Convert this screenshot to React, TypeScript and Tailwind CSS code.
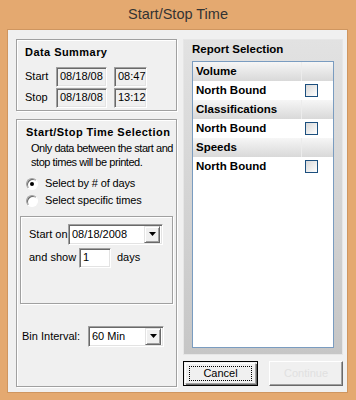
import React from "react";

const FONT = { fontFamily: '"Liberation Sans", Arial, sans-serif' };

// etched group box border (gray line + white highlight)
const etched =
  "border border-[#a0a0a0] shadow-[inset_1px_1px_0_#ffffff,1px_1px_0_#ffffff]";

// classic 3D sunken field
const sunken =
  "border border-t-[#a0a0a0] border-l-[#a0a0a0] border-b-white border-r-white shadow-[inset_1px_1px_0_#696969,inset_-1px_-1px_0_#e3e3e3]";

function Field({ value, className }: { value: string; className: string }) {
  return (
    <div className={`${sunken} flex h-[20px] items-center bg-[#f0f0f0] pl-[3px] text-[11px] text-black ${className}`}>
      {value}
    </div>
  );
}

function Combo({ value, className }: { value: string; className: string }) {
  return (
    <div className={`${sunken} flex h-[21px] items-center bg-white pl-[3px] pr-[2px] text-[11px] ${className}`}>
      <span className="flex-1">{value}</span>
      <div className="flex h-[17px] w-[16px] items-center justify-center border border-t-[#e3e3e3] border-l-[#e3e3e3] border-b-[#696969] border-r-[#696969] bg-[#f0f0f0] shadow-[inset_1px_1px_0_#ffffff,inset_-1px_-1px_0_#a0a0a0]">
        <svg width="7" height="4" viewBox="0 0 7 4">
          <path d="M0 0h7L3.5 4z" fill="#000" />
        </svg>
      </div>
    </div>
  );
}

function Radio({ checked, label }: { checked?: boolean; label: string }) {
  return (
    <div className="flex h-[16px] items-center gap-[7px]">
      <div className="flex h-[12px] w-[12px] items-center justify-center rounded-full border border-t-[#a0a0a0] border-l-[#a0a0a0] border-b-white border-r-white bg-white shadow-[inset_1px_1px_0_#696969]">
        {checked && <div className="h-[4px] w-[4px] rounded-full bg-black" />}
      </div>
      <span className="tracking-[-0.15px]">{label}</span>
    </div>
  );
}

function HeaderRow({ label }: { label: string }) {
  return (
    <div className="flex h-[19px] bg-gradient-to-b from-[#f6f6f6] to-[#d9d9d9]">
      <div className="flex flex-1 items-center border-r border-[#ececec] pl-[3px]">{label}</div>
      <div className="w-[31px]" />
    </div>
  );
}

function CheckRow({ label }: { label: string }) {
  return (
    <div className="flex h-[19px] bg-white">
      <div className="flex flex-1 items-center pl-[3px]">{label}</div>
      <div className="flex w-[31px] items-center pl-[3px]">
        <div className="h-[13px] w-[13px] border border-[#1c4f7e] bg-gradient-to-br from-[#d8d8d8] to-[#ffffff]" />
      </div>
    </div>
  );
}

export default function App() {
  return (
    <div className="flex h-[400px] w-[356px] flex-col bg-[#e4a970] text-black" style={FONT}>
      <div className="flex h-[29px] items-center justify-center text-[14.5px] text-[#333333]">
        Start/Stop Time
      </div>
      <div className="mb-[7px] ml-[7px] mr-[8px] flex flex-1 gap-[6px] border border-[#cf9660] bg-[#f0f0f0] pb-[5px] pl-[8px] pr-[4px] pt-[9px] text-[11px]">
        {/* left column */}
        <div className="flex w-[161px] flex-col gap-[8px]">
          <div className={`${etched} h-[72px] pl-[8px] pt-[4px]`}>
            <div className="text-[11px] font-bold tracking-[0.45px]">Data Summary</div>
            <div className="mt-[6px] flex flex-col gap-[1px]">
              <div className="flex items-center">
                <span className="w-[31px]">Start</span>
                <Field value="08/18/08" className="w-[51px]" />
                <Field value="08:47" className="ml-[7px] w-[33px]" />
              </div>
              <div className="flex items-center">
                <span className="w-[31px]">Stop</span>
                <Field value="08/18/08" className="w-[51px]" />
                <Field value="13:12" className="ml-[7px] w-[33px]" />
              </div>
            </div>
          </div>

          <div className={`${etched} flex flex-1 flex-col pl-[3px] pr-[3px] pt-[4px]`}>
            <div className="pl-[6px] text-[11px] font-bold tracking-[0.45px]">Start/Stop Time Selection</div>
            <div className="whitespace-nowrap pl-[11px] leading-[14px] tracking-[-0.45px]">
              Only data between the start and
              <br />
              stop times will be printed.
            </div>
            <div className="mt-[7px] flex flex-col gap-[1px] pl-[6px]">
              <Radio checked label="Select by # of days" />
              <Radio label="Select specific times" />
            </div>
            <div className={`${etched} mt-[7px] flex h-[88px] w-[153px] flex-col gap-[3px] pl-[8px] pt-[7px]`}>
              <div className="flex items-center">
                <span className="w-[39px]">Start on</span>
                <Combo value="08/18/2008" className="w-[95px]" />
              </div>
              <div className="flex items-center">
                <span className="w-[50px]">and show</span>
                <div className={`${sunken} flex h-[20px] w-[32px] items-center bg-white pl-[3px]`}>1</div>
                <span className="ml-[6px]">days</span>
              </div>
            </div>
            <div className="mt-[22px] flex items-center pl-[2px]">
              <span className="w-[66px]">Bin Interval:</span>
              <Combo value="60 Min" className="w-[76px]" />
            </div>
          </div>
        </div>

        {/* right column */}
        <div className="flex w-[160px] flex-col">
          <div className="flex h-[316px] flex-col border border-[#e6e6e6] bg-gradient-to-b from-[#e2e2e2] to-[#c6c6c6] px-[8px] pb-[6px] pt-[1px]">
            <div className="text-[11.5px] font-bold">Report Selection</div>
            <div className="mt-[3px] flex-1 border border-[#7a9cc0] bg-white text-[11.5px] font-bold">
              <HeaderRow label="Volume" />
              <CheckRow label="North Bound" />
              <HeaderRow label="Classifications" />
              <CheckRow label="North Bound" />
              <HeaderRow label="Speeds" />
              <CheckRow label="North Bound" />
            </div>
          </div>
          <div className="mt-[6px] flex gap-[11px]">
            <div className="flex h-[25px] w-[75px] items-center justify-center border border-black bg-[#f0f0f0] p-[1px]">
              <div className="flex h-full w-full items-center justify-center border border-t-white border-l-white border-b-[#a0a0a0] border-r-[#a0a0a0] shadow-[1px_1px_0_#696969]">
                <span className="flex h-[15px] w-[63px] items-center justify-center border border-dotted border-black">
                  Cancel
                </span>
              </div>
            </div>
            <div className="flex h-[25px] w-[74px] items-center justify-center border border-t-white border-l-white border-b-[#696969] border-r-[#696969] bg-[#f0f0f0] text-[#e0e0e0] shadow-[inset_-1px_-1px_0_#a0a0a0]">
              Continue
            </div>
          </div>
        </div>
      </div>
    </div>
  );
}
